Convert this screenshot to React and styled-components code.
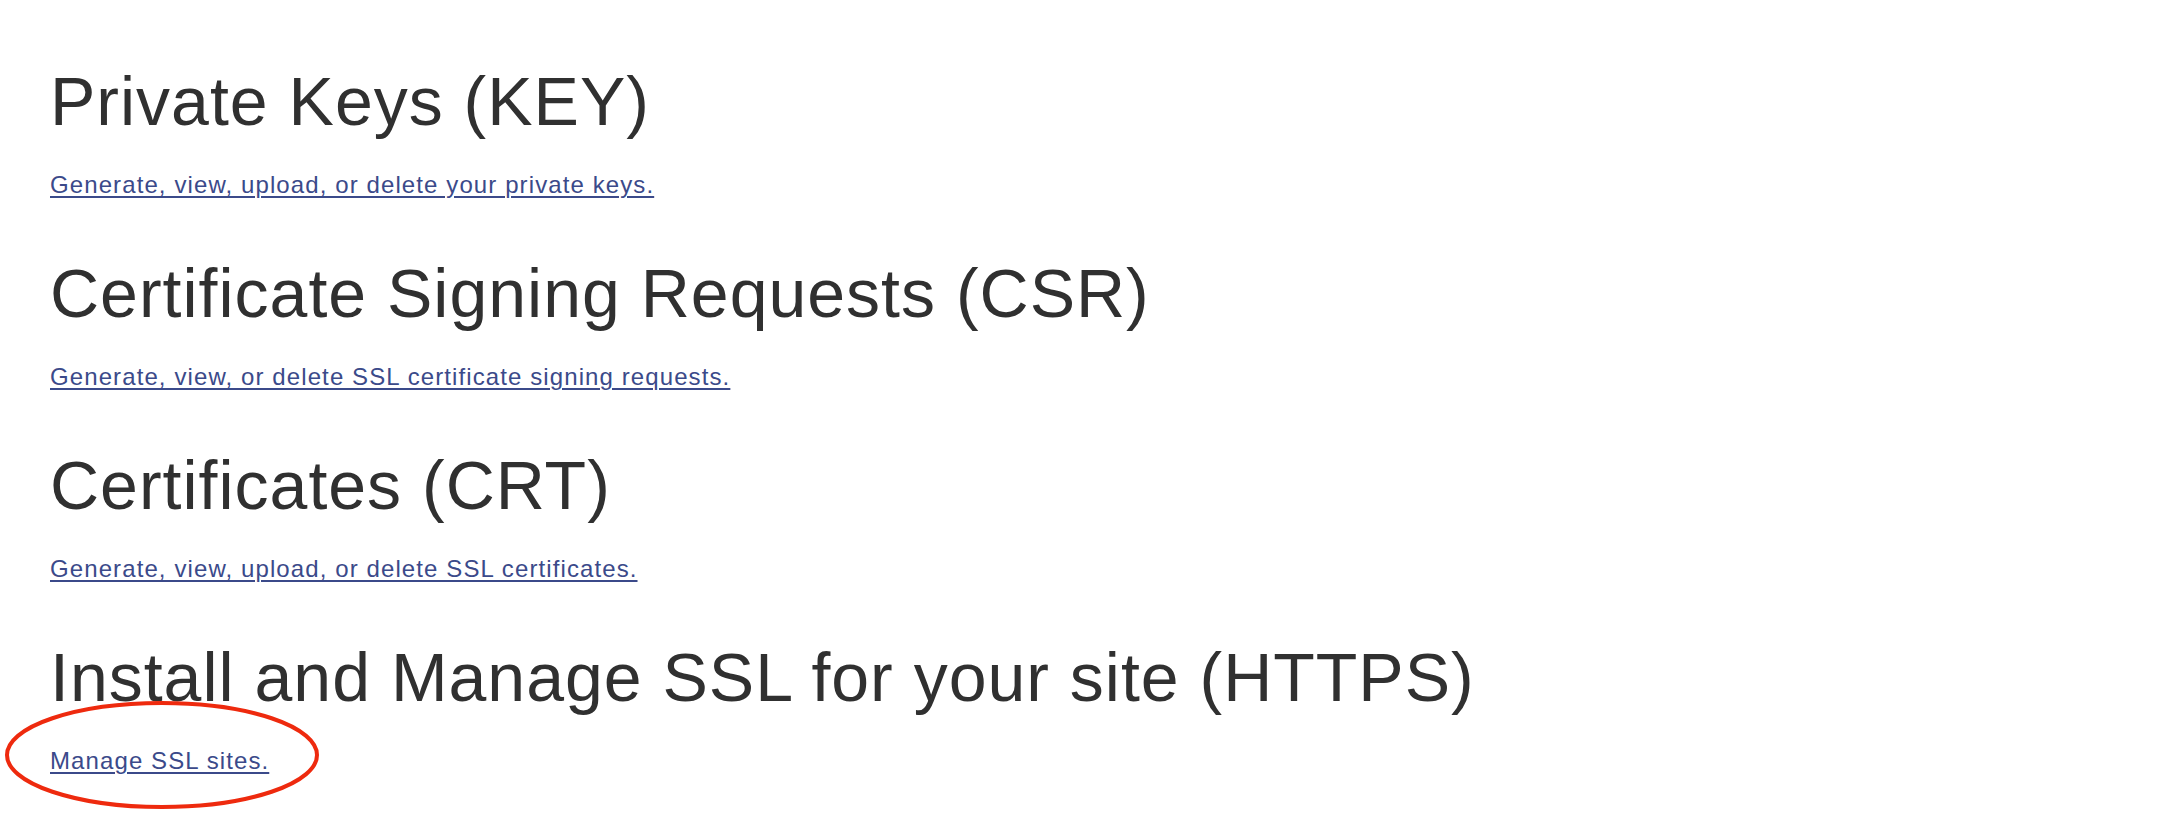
import React from "react";
import styled, { createGlobalStyle } from "styled-components";

const GlobalStyle = createGlobalStyle`
  html, body {
    margin: 0;
    padding: 0;
    background: #ffffff;
  }
  body {
    font-family: "Liberation Sans", Arial, sans-serif;
    color: #333333;
  }
`;

const Page = styled.main`
  box-sizing: border-box;
  min-height: 832px;
  display: flex;
  flex-direction: column;
  gap: 53px;
  padding: 61px 0 0 50px;
`;

const Section = styled.section`
  position: relative;
  display: flex;
  flex-direction: column;
  align-items: flex-start;
  gap: 29px;
`;

const Heading = styled.h1`
  margin: 0;
  font-family: "Liberation Sans", Arial, sans-serif;
  font-weight: 400;
  font-size: 68px;
  line-height: 80px;
  letter-spacing: 1px;
  color: #303030;
  white-space: nowrap;
`;

const Link = styled.a`
  display: block;
  font-family: "Liberation Sans", Arial, sans-serif;
  font-size: 24px;
  line-height: 30px;
  letter-spacing: 1.1px;
  color: #3b4a8a;
  text-decoration: underline;
  text-decoration-thickness: 2px;
  text-underline-offset: 3px;
  white-space: nowrap;
`;

const Annotation = styled.svg`
  position: absolute;
  left: -47px;
  top: 63px;
  width: 318px;
  height: 112px;
  overflow: visible;
  pointer-events: none;
`;

const sections = [
  {
    title: "Private Keys (KEY)",
    link: "Generate, view, upload, or delete your private keys.",
  },
  {
    title: "Certificate Signing Requests (CSR)",
    link: "Generate, view, or delete SSL certificate signing requests.",
  },
  {
    title: "Certificates (CRT)",
    link: "Generate, view, upload, or delete SSL certificates.",
  },
  {
    title: "Install and Manage SSL for your site (HTTPS)",
    link: "Manage SSL sites.",
    circled: true,
  },
];

export default function App() {
  return (
    <>
      <GlobalStyle />
      <Page>
        {sections.map((s) => (
          <Section key={s.title}>
            <Heading>{s.title}</Heading>
            <Link href="#">{s.link}</Link>
            {s.circled && (
              <Annotation viewBox="0 0 318 112">
                <ellipse
                  cx="159"
                  cy="55"
                  rx="155"
                  ry="52"
                  fill="none"
                  stroke="#ee2a0e"
                  strokeWidth="4"
                />
              </Annotation>
            )}
          </Section>
        ))}
      </Page>
    </>
  );
}
